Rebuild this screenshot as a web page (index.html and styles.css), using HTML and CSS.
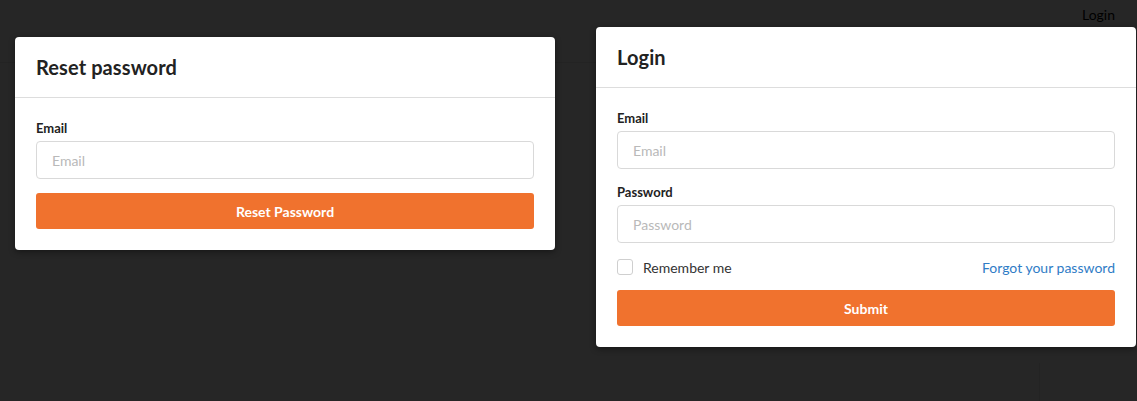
FILE: index.html
```html
<!DOCTYPE html>
<html>
<head>
<meta charset="utf-8">
<link rel="stylesheet" href="styles.css">
</head>
<body>
<div class="page">
  <nav class="navbar">
    <a class="nav-link" href="#">Login</a>
  </nav>
  <div class="page-body">
    <div class="side-col"></div>
  </div>
</div>
<div class="overlay">
  <div class="modal modal-reset">
    <div class="modal-header"><h2>Reset password</h2></div>
    <div class="modal-body">
      <label class="field-label">Email</label>
      <input class="input" type="text" placeholder="Email">
      <button class="btn">Reset Password</button>
    </div>
  </div>
  <div class="modal modal-login">
    <div class="modal-header"><h2>Login</h2></div>
    <div class="modal-body">
      <label class="field-label">Email</label>
      <input class="input" type="text" placeholder="Email">
      <label class="field-label field-gap">Password</label>
      <input class="input" type="password" placeholder="Password">
      <div class="check-row">
        <label class="check"><span class="box"></span>Remember me</label>
        <a class="link" href="#">Forgot your password</a>
      </div>
      <button class="btn btn-submit">Submit</button>
    </div>
  </div>
</div>
</body>
</html>
```
FILE: styles.css
```css
* { box-sizing: border-box; }
html, body { margin: 0; padding: 0; }
body {
  width: 1137px;
  height: 401px;
  overflow: hidden;
  font-family: Lato, "Open Sans", sans-serif;
  background: #ffffff;
  position: relative;
}
.page { height: 401px; display: flex; flex-direction: column; }
.navbar {
  height: 63px;
  border-bottom: 1px solid #e8e8e8;
  display: flex;
  justify-content: flex-end;
  align-items: flex-start;
  padding: 5px 22px 0 0;
}
.nav-link { color: #000; text-decoration: none; font-size: 14px; line-height: 20px; }
.page-body { flex: 1; display: flex; justify-content: flex-end; padding-top: 300px; }
.side-col { width: 98px; border-left: 1px solid #e6e6e6; }

.overlay {
  position: absolute;
  inset: 0;
  background: rgba(0, 0, 0, 0.85);
  display: flex;
  align-items: flex-start;
  padding-left: 15px;
}
.modal {
  width: 540px;
  background: #fff;
  border-radius: 4px;
  box-shadow: 0 2px 6px rgba(0,0,0,0.4);
}
.modal-reset { margin-top: 37px; }
.modal-login { margin-top: 27px; margin-left: 41px; }
.modal-header {
  height: 61px;
  border-bottom: 1px solid #dddddd;
  display: flex;
  align-items: center;
  padding: 0 21px;
}
.modal-header h2 {
  margin: 0;
  font-size: 20px;
  font-weight: 700;
  color: #222;
  letter-spacing: 0.1px;
}
.modal-body {
  display: flex;
  flex-direction: column;
  padding: 20px 21px 21px;
}
.field-label {
  font-size: 13px;
  font-weight: 700;
  color: #222;
  line-height: 20px;
  margin-bottom: 3px;
}
.field-gap { margin-top: 13px; }
.input {
  height: 38px;
  border: 1px solid #d9d9d9;
  border-radius: 4px;
  padding: 0 15px;
  font-family: inherit;
  font-size: 14px;
  color: #333;
  outline: none;
}
.input::placeholder { color: #b9b9b9; }
.btn {
  margin-top: 14px;
  height: 36px;
  border: none;
  border-radius: 3px;
  background: #f0722e;
  color: #fff;
  font-family: inherit;
  font-size: 14px;
  font-weight: 700;
}
.btn-submit { margin-top: 11px; }
.check-row {
  margin-top: 12px;
  height: 24px;
  display: flex;
  align-items: center;
  justify-content: space-between;
  font-size: 14px;
}
.check { display: flex; align-items: center; gap: 10px; color: #333; }
.box {
  width: 16px;
  height: 16px;
  border: 1px solid #cfcfcf;
  border-radius: 3px;
  background: #fff;
}
.link { color: #2f7cc6; text-decoration: none; }
```
